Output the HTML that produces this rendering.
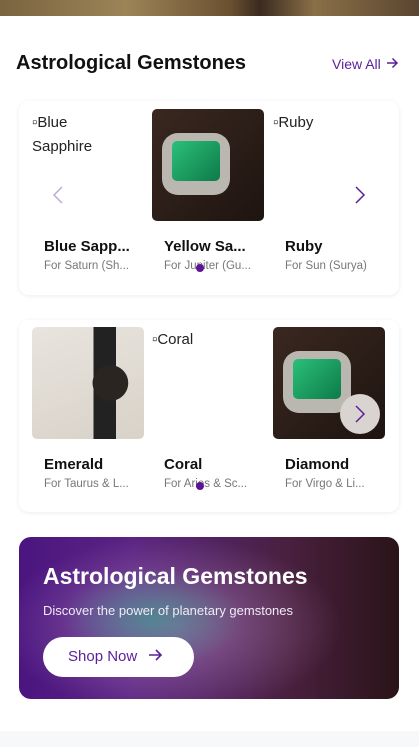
<!DOCTYPE html>
<html><head><meta charset="utf-8"><style>
*{margin:0;padding:0;box-sizing:border-box}
body{width:419px;height:747px;overflow:hidden;background:#fff;font-family:"Liberation Sans",sans-serif;position:relative}
.top{position:absolute;left:0;top:0;width:419px;height:16px;background:linear-gradient(90deg,#7a6440,#9c8457 30%,#6b5030 55%,#3a2a20 62%,#8a7048 75%,#5a4530)}
h2{position:absolute;left:16px;top:52px;font-size:20px;font-weight:bold;color:#111}
.va{position:absolute;left:332px;top:56px;font-size:14px;color:#5b1f99}
.card{position:absolute;left:19px;width:380px;background:#fff;border-radius:10px;box-shadow:0 1px 5px rgba(0,0,0,.08)}
.img{position:absolute;width:112px;height:112px;border-radius:5px;overflow:hidden;background:linear-gradient(135deg,#3a2820,#1e1410)}
.img .ring{position:absolute;left:10px;top:24px;width:68px;height:62px;border-radius:16px;background:#b9b7b0}
.img .gem{position:absolute;left:20px;top:32px;width:48px;height:40px;border-radius:5px;background:linear-gradient(135deg,#2bc07a,#0d7a48)}
.watch{background:radial-gradient(circle 22px at 70% 50%,#2a2520 80%,transparent 82%),linear-gradient(90deg,transparent 55%,#222 55%,#222 75%,transparent 75%),linear-gradient(160deg,#e8e4de,#d8d2c8)}
.alt{position:absolute;font-size:15px;color:#222;line-height:24px}
.nm{position:absolute;font-size:15px;font-weight:bold;color:#111}
.sb{position:absolute;font-size:11.5px;color:#777}
.dot{position:absolute;width:8px;height:8px;border-radius:50%;background:#5b1497}
.banner{position:absolute;left:19px;top:537px;width:380px;height:162px;border-radius:12px;overflow:hidden;background:radial-gradient(ellipse 90px 50px at 35% 50%,rgba(60,150,140,.7),transparent),radial-gradient(ellipse 170px 90px at 40% 55%,rgba(190,150,200,.55),transparent),linear-gradient(90deg,#4b1580 0%,#5a2482 30%,#4a2040 70%,#2a1418 100%)}
</style></head><body>
<div class="top"></div>
<h2>Astrological Gemstones</h2>
<div class="va">View All <svg width="14" height="14" viewBox="0 0 14 14" style="vertical-align:-1px"><path d="M2 7h10M7.5 2.5 12 7l-4.5 4.5" stroke="#5b1f99" stroke-width="1.5" fill="none"/></svg></div>

<div class="card" style="top:101px;height:194px">
 <div class="alt" style="left:13px;top:10px">▫Blue<br>Sapphire</div>
 <div class="img" style="left:133px;top:8px"><div class="ring"></div><div class="gem"></div></div>
 <div class="alt" style="left:254px;top:10px">▫Ruby</div>
 <svg style="position:absolute;left:32px;top:84px" width="14" height="20"><path d="M11 2 3 10l8 8" stroke="#c0a8dc" stroke-width="1.5" fill="none"/></svg>
 <svg style="position:absolute;left:334px;top:84px" width="14" height="20"><path d="M3 2l8 8-8 8" stroke="#5b1f99" stroke-width="1.5" fill="none"/></svg>
 <div class="nm" style="left:25px;top:137px">Blue Sapp...</div>
 <div class="nm" style="left:145px;top:137px">Yellow Sa...</div>
 <div class="nm" style="left:266px;top:137px">Ruby</div>
 <div class="sb" style="left:25px;top:159px">For Saturn (Sh...</div>
 <div class="sb" style="left:145px;top:159px">For Jupiter (Gu...</div>
 <div class="sb" style="left:266px;top:159px">For Sun (Surya)</div>
 <div class="dot" style="left:177px;top:163px"></div>
</div>

<div class="card" style="top:320px;height:192px">
 <div class="img watch" style="left:13px;top:7px"></div>
 <div class="alt" style="left:133px;top:8px">▫Coral</div>
 <div class="img" style="left:254px;top:7px"><div class="ring"></div><div class="gem"></div></div>
 <div style="position:absolute;left:321px;top:74px;width:40px;height:40px;border-radius:50%;background:#d9d4d0"><svg style="position:absolute;left:13px;top:10px" width="14" height="20"><path d="M3 2l8 8-8 8" stroke="#5b1f99" stroke-width="1.5" fill="none"/></svg></div>
 <div class="nm" style="left:25px;top:136px">Emerald</div>
 <div class="nm" style="left:145px;top:136px">Coral</div>
 <div class="nm" style="left:266px;top:136px">Diamond</div>
 <div class="sb" style="left:25px;top:158px">For Taurus &amp; L...</div>
 <div class="sb" style="left:145px;top:158px">For Aries &amp; Sc...</div>
 <div class="sb" style="left:266px;top:158px">For Virgo &amp; Li...</div>
 <div class="dot" style="left:177px;top:162px"></div>
</div>

<div class="banner">
 <div style="position:absolute;left:24px;top:26px;font-size:23px;font-weight:bold;color:#fff">Astrological Gemstones</div>
 <div style="position:absolute;left:24px;top:66px;font-size:13px;color:#f0eaf5">Discover the power of planetary gemstones</div>
 <div style="position:absolute;left:24px;top:100px;width:151px;height:40px;border-radius:20px;background:#fff;color:#5b1f99;font-size:15px;padding:11px 0 0 25px">Shop Now <svg width="16" height="14" viewBox="0 0 16 14" style="vertical-align:-1px;margin-left:6px"><path d="M2 7h12M9 2l5 5-5 5" stroke="#5b1f99" stroke-width="1.6" fill="none"/></svg></div>
</div>
<div style="position:absolute;left:0;top:731px;width:419px;height:16px;background:#f7f8fa"></div>
</body></html>
